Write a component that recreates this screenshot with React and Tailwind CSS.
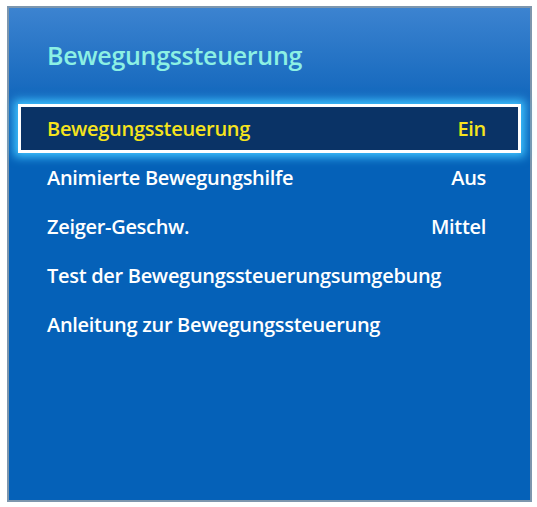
export default function App() {
  const rows = [
    { label: "Animierte Bewegungshilfe", value: "Aus" },
    { label: "Zeiger-Geschw.", value: "Mittel" },
    { label: "Test der Bewegungssteuerungsumgebung", value: "" },
    { label: "Anleitung zur Bewegungssteuerung", value: "" },
  ];
  return (
    <div className="w-[537px] h-[507px] bg-white pt-[6px] pl-[7px]" style={{ fontFamily: '"Open Sans", "Noto Sans", sans-serif' }}>
      <div className="w-[525px] h-[496px] border-2 border-[#7d96ad] bg-[linear-gradient(180deg,#3c83d0_0%,#1468bd_18%,#0561b8_30%,#0561b8_100%)] flex flex-col">
        <div className="h-[96px] flex items-center pl-[38px] pb-[1px]">
          <span className="text-[25px] font-semibold text-[#8cf0e4] tracking-[-0.3px]">Bewegungssteuerung</span>
        </div>
        <div className="mx-[9px] h-[49px] border-[3px] border-white bg-[#0a3366] shadow-[0_0_9px_4px_#3fc4ff] flex items-center justify-between pl-[26px] pr-[32px]">
          <span className="text-[20px] font-semibold text-[#f6e41d] tracking-[-0.3px]">Bewegungssteuerung</span>
          <span className="text-[20px] font-semibold text-[#f6e41d] tracking-[-0.3px]">Ein</span>
        </div>
        {rows.map((r) => (
          <div key={r.label} className="mx-[9px] h-[49px] flex items-center justify-between pl-[29px] pr-[35px]">
            <span className="text-[20px] font-semibold text-white tracking-[-0.3px]">{r.label}</span>
            <span className="text-[20px] font-semibold text-white tracking-[-0.3px]">{r.value}</span>
          </div>
        ))}
      </div>
    </div>
  );
}
